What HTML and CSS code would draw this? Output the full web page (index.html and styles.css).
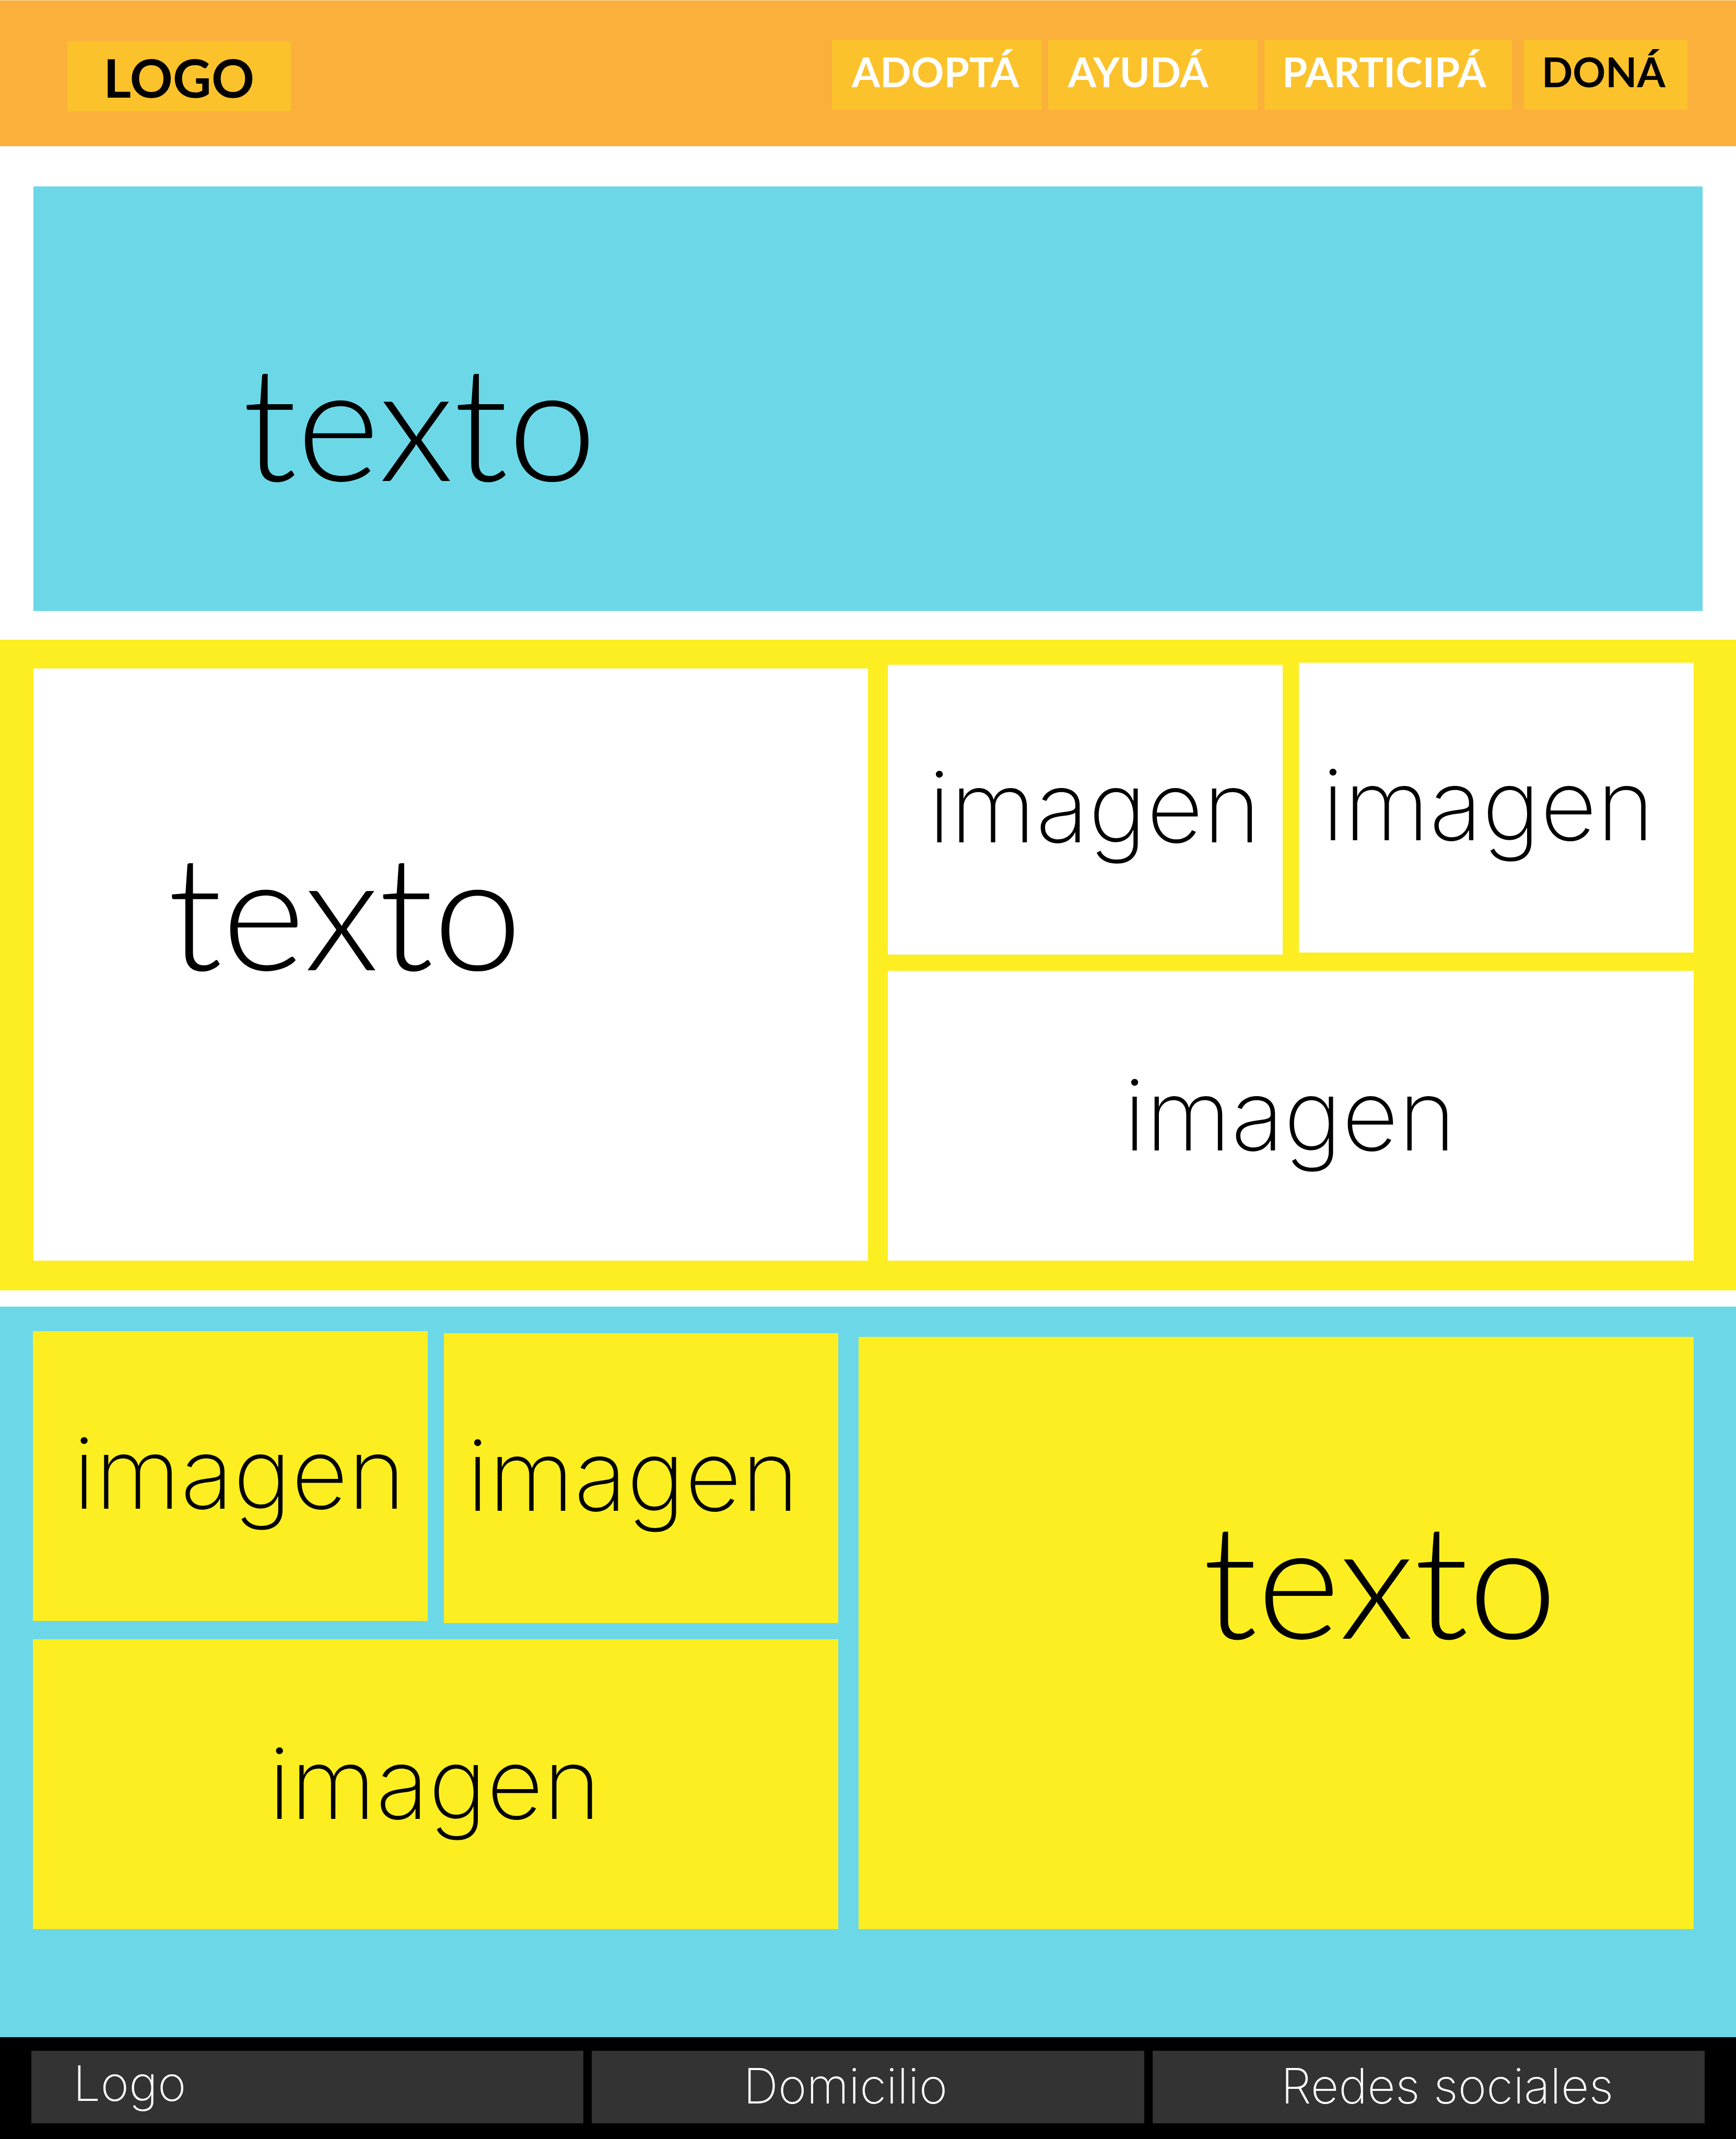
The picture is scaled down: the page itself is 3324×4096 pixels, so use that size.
FILE: index.html
```
<!DOCTYPE html>
<html lang="es">
<head>
  <meta charset="utf-8">
  <meta name="viewport" content="width=device-width, initial-scale=1">
  <title>Logo</title>
  <link rel="stylesheet" href="styles.css">
</head>
<body>
  <header class="site-header">
    <a class="brand" href="#">LOGO</a>
    <nav class="menu">
      <a class="menu-link" href="#adopta">ADOPTÁ</a>
      <a class="menu-link" href="#ayuda">AYUDÁ</a>
      <a class="menu-link menu-link-wide" href="#participa">PARTICIPÁ</a>
      <a class="menu-link menu-link-donate" href="#dona">DONÁ</a>
    </nav>
  </header>

  <main>
    <section class="hero">
      <h1 class="title">texto</h1>
    </section>

    <section class="band band-yellow">
      <div class="panel">
        <h2 class="title">texto</h2>
      </div>
      <div class="gallery">
        <div class="tile tile-low">imagen</div>
        <div class="tile tile-second">imagen</div>
        <div class="tile tile-wide">imagen</div>
      </div>
    </section>

    <section class="band band-blue">
      <div class="gallery">
        <div class="tile">imagen</div>
        <div class="tile tile-second tile-low">imagen</div>
        <div class="tile tile-wide">imagen</div>
      </div>
      <div class="panel">
        <h2 class="title">texto</h2>
      </div>
    </section>
  </main>

  <footer class="site-footer">
    <div class="footer-cell footer-logo">Logo</div>
    <div class="footer-cell footer-address">Domicilio</div>
    <div class="footer-cell footer-social">Redes sociales</div>
  </footer>
</body>
</html>
```
FILE: styles.css
```
* {
  box-sizing: border-box;
}

body {
  margin: 0;
  background: #fff;
  color: #000;
  font-family: Inter, "Liberation Sans", sans-serif;
  font-weight: 200;
}

a {
  color: inherit;
  text-decoration: none;
}

/* Header */

.site-header {
  display: flex;
  justify-content: space-between;
  align-items: flex-start;
  min-height: 280px;
  padding: 75px 93px 0 129px;
  border-top: 1px solid #fde3bc;
  background: #fbb03b;
  font-family: Lato, "Liberation Sans", sans-serif;
  font-weight: 700;
}

.brand {
  width: 428px;
  height: 134px;
  margin-top: 3px;
  padding: 18px 0 0 69px;
  background: #fbc22b;
  font-size: 102px;
  line-height: 1;
}

.menu {
  display: flex;
  gap: 13px;
}

.menu-link {
  width: 401px;
  height: 134px;
  padding: 22px 0 0 38px;
  background: #fbc22b;
  color: #fff;
  font-size: 78px;
  line-height: 1;
}

.menu-link-wide {
  width: 474px;
  padding-left: 34px;
}

.menu-link-donate {
  width: 313px;
  margin-left: 10px;
  padding-left: 34px;
  color: #000;
}

/* Main blocks */

.title {
  margin: 0;
  font-family: Lato, "Liberation Sans", sans-serif;
  font-size: 305px;
  font-weight: 300;
  line-height: 1;
}

.hero {
  min-height: 813px;
  margin: 77px 64px 55px;
  padding: 294px 0 0 400px;
  background: #6cd8e7;
}

.band {
  display: grid;
  column-gap: 38px;
}

.band-yellow {
  grid-template-columns: 1599fr 1543fr;
  padding: 44px 81px 57px 64px;
  background: #fcee21;
}

.band-blue {
  grid-template-columns: 1542fr 1599fr;
  column-gap: 39px;
  margin-top: 31px;
  padding: 47px 81px 207px 63px;
  background: #6cd8e7;
}

.panel {
  align-self: end;
  min-height: 1134px;
  padding-top: 308px;
}

.gallery {
  display: grid;
  grid-template-columns: 1fr 1fr;
  grid-template-rows: 559px auto;
  gap: 31px;
}

.tile {
  min-height: 555px;
  align-self: start;
  padding: 178px 0 0 77px;
  font-size: 188px;
  line-height: 1;
}

.tile-low {
  align-self: end;
}

.tile-second {
  padding-left: 44px;
}

.tile-wide {
  grid-column: 1 / -1;
  padding: 182px 0 0 451px;
}

.band-yellow .panel,
.band-yellow .tile {
  background: #fff;
}

.band-yellow .panel {
  padding-left: 257px;
}

.band-blue .panel,
.band-blue .tile {
  background: #fcee21;
}

.band-blue .panel {
  padding-left: 659px;
}

/* Footer */

.site-footer {
  display: grid;
  grid-template-columns: repeat(3, 1fr);
  gap: 16px;
  padding: 26px 60px 30px;
  background: #000;
}

.footer-cell {
  min-height: 139px;
  padding-top: 21px;
  background: #333;
  color: #fff;
  font-size: 93px;
  line-height: 1;
}

.footer-logo {
  padding: 16px 0 0 80px;
}

.footer-address {
  padding-left: 290px;
}

.footer-social {
  padding-left: 246px;
}
```
